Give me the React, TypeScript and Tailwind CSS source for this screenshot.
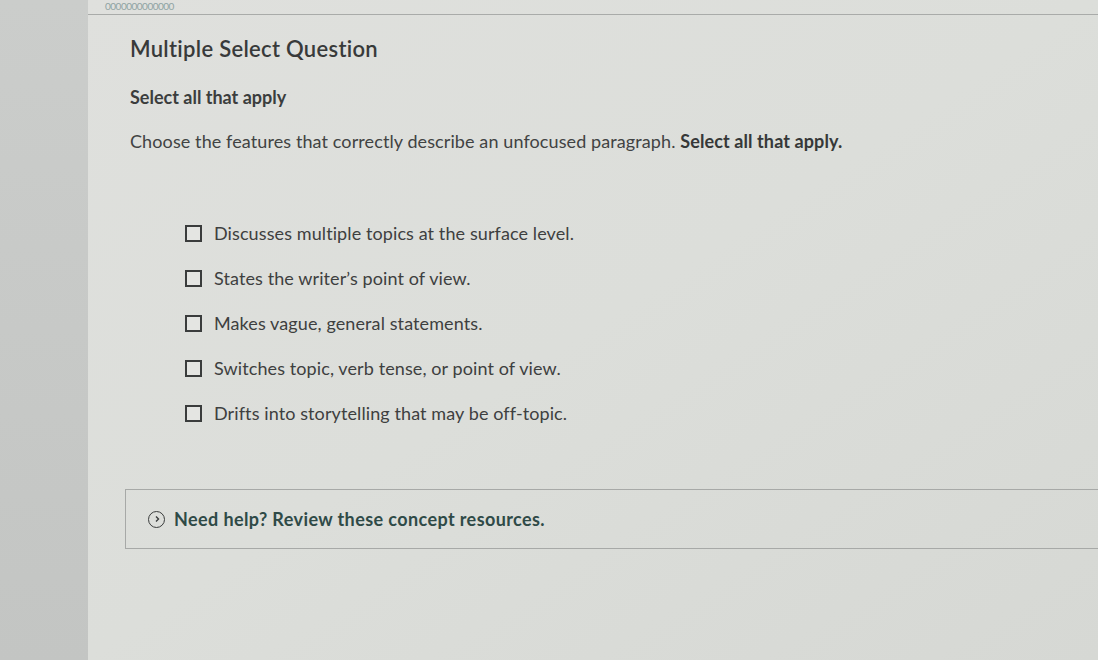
import React from "react";

const options = [
  "Discusses multiple topics at the surface level.",
  "States the writer’s point of view.",
  "Makes vague, general statements.",
  "Switches topic, verb tense, or point of view.",
  "Drifts into storytelling that may be off-topic.",
];

export default function App() {
  return (
    <div className="flex h-[660px] w-[1098px] overflow-hidden bg-[#c9cbc9] font-['Lato',sans-serif] text-[#3b3d3d]">
      {/* left strip */}
      <div className="w-[88px] shrink-0 bg-gradient-to-b from-[#cbcdcb] to-[#c3c5c3]" />

      <div className="flex flex-1 flex-col bg-gradient-to-br from-[#dfe0dd] via-[#dcdeda] to-[#d6d8d4]">
        {/* top strip */}
        <div className="h-[15px] border-b border-[#a9aba9] pl-[17px] pt-[1px] text-[10px] leading-[10px] tracking-[-0.5px] text-[#8fa3a3]">
          0000000000000
        </div>

        <div className="pl-[42px]">
          <h1 className="mt-[20px] text-[22px] font-semibold leading-[28px] tracking-[0.3px] text-[#383a3a]">
            Multiple Select Question
          </h1>
          <p className="mt-[23px] text-[18px] font-bold leading-[22px]">Select all that apply</p>
          <p className="mt-[21px] text-[18px] leading-[24px] tracking-[0.1px] text-[#414343]">
            Choose the features that correctly describe an unfocused paragraph.{" "}
            <span className="font-bold text-[#363838]">Select all that apply.</span>
          </p>

          <ul className="mt-[68px] flex flex-col gap-[21px] pl-[55px]">
            {options.map((opt, i) => (
              <li key={i} className="flex items-center gap-[12px]">
                <span className="h-[17px] w-[17px] shrink-0 border-2 border-[#3a3c3c] bg-[#e4e5e2]" />
                <span className="text-[18px] leading-[24px] tracking-[0.1px] text-[#3e4040]">{opt}</span>
              </li>
            ))}
          </ul>
        </div>

        {/* help box */}
        <div className="ml-[37px] mt-[64px] flex h-[60px] items-center gap-[9px] border border-r-0 border-[#a7a9a7] pl-[22px]">
          <span className="flex h-[17px] w-[17px] items-center justify-center rounded-full border-[1.5px] border-[#3a3c3c]">
            <svg width="8" height="8" viewBox="0 0 8 8" fill="none">
              <path d="M3 1.5 L5.5 4 L3 6.5" stroke="#3a3c3c" strokeWidth="1.4" />
            </svg>
          </span>
          <span className="text-[18px] font-bold tracking-[0.4px] text-[#2f4a47]">
            Need help? Review these concept resources.
          </span>
        </div>
      </div>
    </div>
  );
}
